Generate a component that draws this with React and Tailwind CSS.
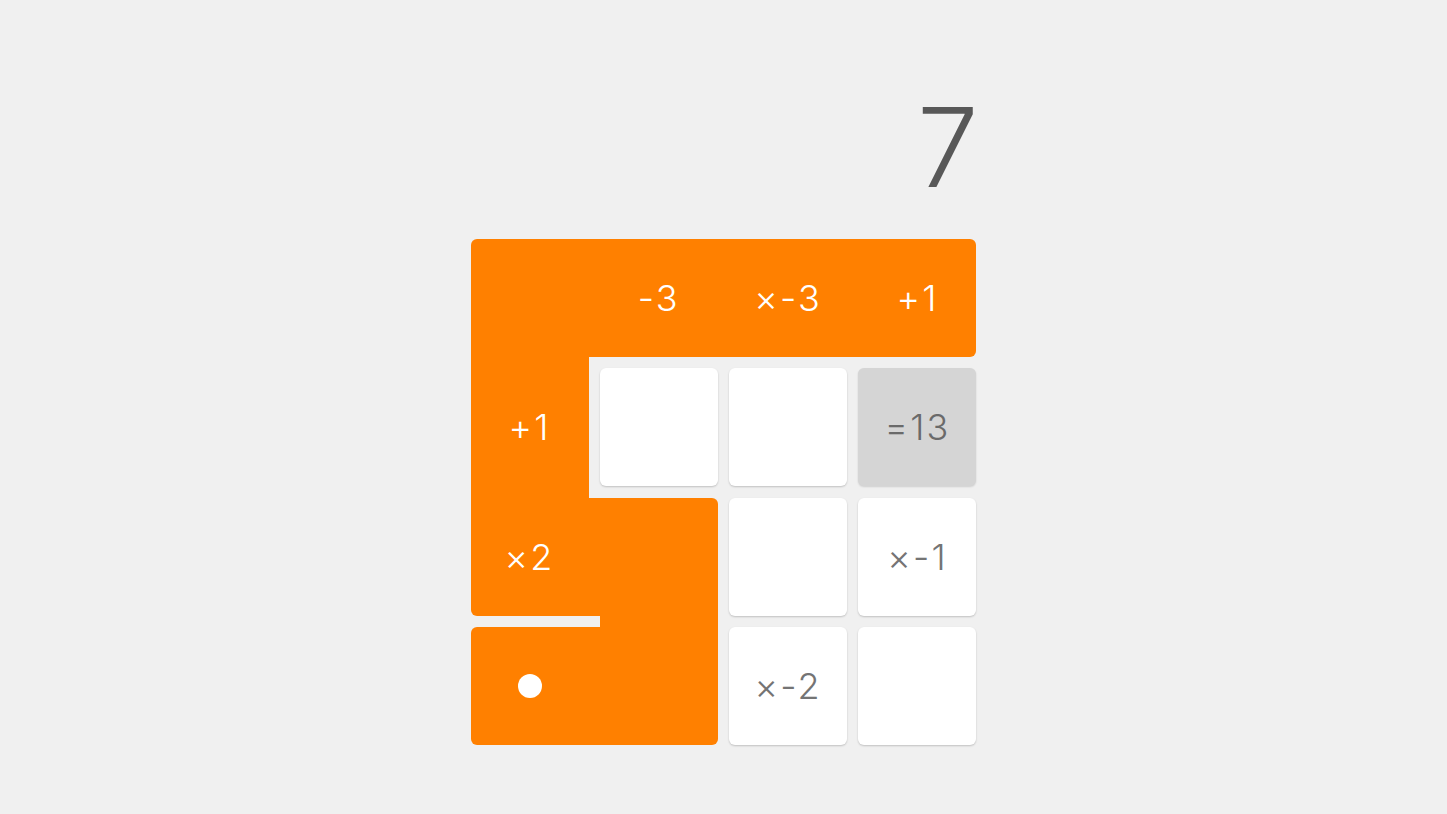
import React from "react";

const ORANGE = "bg-[#ff8000]";

const cells = [
  [{ t: "o" }, { t: "o", l: "-3" }, { t: "o", l: "×-3" }, { t: "o", l: "+1" }],
  [{ t: "o", l: "+1" }, { t: "w" }, { t: "w" }, { t: "g", l: "=13" }],
  [{ t: "o", l: "×2" }, { t: "o" }, { t: "w" }, { t: "w", l: "×-1" }],
  [{ t: "o", dot: true }, { t: "o" }, { t: "w", l: "×-2" }, { t: "w" }],
];

const S = 129.333;
const C = 118;
const H = 59;
const connectors = [
  { l: H, t: 0, w: S, h: C },
  { l: H + S, t: 0, w: S, h: C },
  { l: H + 2 * S, t: 0, w: S, h: C },
  { l: 0, t: H, w: C, h: S },
  { l: 0, t: H + S, w: C, h: S },
  { l: H, t: 2 * S, w: S, h: C },
  { l: S, t: H + 2 * S, w: C, h: S },
  { l: H, t: 3 * S, w: S, h: C },
];

function Cell({ c }) {
  let cls = "";
  let txt = "";
  if (c.t === "o") {
    cls = ORANGE;
    txt = "text-white";
  } else if (c.t === "w") {
    cls = "bg-white shadow-[0_1px_2px_rgba(0,0,0,0.2)]";
    txt = "text-[#747474]";
  } else {
    cls = "bg-[#d5d5d5] shadow-[0_1px_2px_rgba(0,0,0,0.14)]";
    txt = "text-[#6a6a6a]";
  }
  return (
    <div
      className={`relative z-10 flex h-[118px] w-[118px] items-center justify-center rounded-[6px] ${cls}`}
    >
      {c.l && (
        <span
          className={`text-[36px] font-light leading-none tracking-[0.06em] ${txt}`}
          style={{ fontFamily: "Inter, 'Noto Sans', sans-serif" }}
        >
          {c.l}
        </span>
      )}
      {c.dot && <span className="h-[24px] w-[24px] rounded-full bg-white" />}
    </div>
  );
}

export default function App() {
  return (
    <div
      className="flex min-h-[814px] w-full flex-col items-center bg-[#f0f0f0] pt-[92px]"
      style={{ fontFamily: "Inter, 'Noto Sans', sans-serif" }}
    >
      <div className="w-[506px] text-right text-[110px] font-light leading-none text-[#585858]">
        <span className="mr-[-2px]">7</span>
      </div>
      <div className="relative mt-[37px]">
        {connectors.map((k, i) => (
          <div
            key={i}
            className={`absolute z-0 ${ORANGE}`}
            style={{ left: k.l, top: k.t, width: k.w, height: k.h }}
          />
        ))}
        <div className="grid grid-cols-[repeat(4,118px)] grid-rows-[repeat(4,118px)] gap-[11.333px]">
          {cells.flat().map((c, i) => (
            <Cell key={i} c={c} />
          ))}
        </div>
      </div>
    </div>
  );
}
